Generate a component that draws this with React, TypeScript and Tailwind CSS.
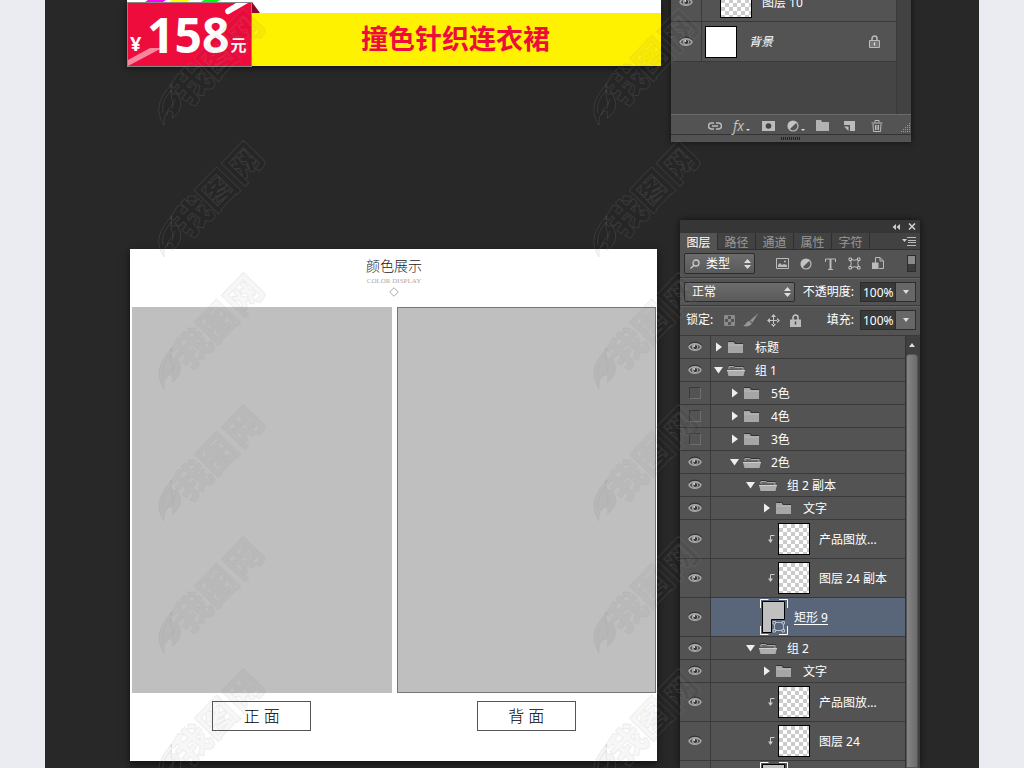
import type { ReactNode } from 'react'

type Layer = {
  name: string
  kind: 'closed' | 'open' | 'image' | 'shape'
  indent: string
  hidden?: boolean
}

const layers: Layer[] = [
  { name: '标题', kind: 'closed', indent: 'pl-[3px]' },
  { name: '组 1', kind: 'open', indent: 'pl-[3px]' },
  { name: '5色', kind: 'closed', indent: 'pl-[19px]', hidden: true },
  { name: '4色', kind: 'closed', indent: 'pl-[19px]', hidden: true },
  { name: '3色', kind: 'closed', indent: 'pl-[19px]', hidden: true },
  { name: '2色', kind: 'open', indent: 'pl-[19px]' },
  { name: '组 2 副本', kind: 'open', indent: 'pl-[35px]' },
  { name: '文字', kind: 'closed', indent: 'pl-[51px]' },
  { name: '产品图放...', kind: 'image', indent: 'pl-14' },
  { name: '图层 24 副本', kind: 'image', indent: 'pl-14' },
  { name: '矩形 9', kind: 'shape', indent: 'pl-[49px]' },
  { name: '组 2', kind: 'open', indent: 'pl-[35px]' },
  { name: '文字', kind: 'closed', indent: 'pl-[51px]' },
  { name: '产品图放...', kind: 'image', indent: 'pl-14' },
  { name: '图层 24', kind: 'image', indent: 'pl-14' },
  { name: '矩形 9', kind: 'shape', indent: 'pl-[49px]' },
]

const tabs = ['图层', '路径', '通道', '属性', '字符']

function Eye() {
  return (
    <svg width="14" height="12" viewBox="0 0 14 12" fill="none">
      <path d="M1 4C3 .200 11 .200 13 4" stroke="#2f2f2f" />
      <path d="M1 6C3 1.600 11 1.600 13 6 11 10.400 3 10.400 1 6z" stroke="#a8a8a8" strokeWidth="1.500" />
      <circle cx="7" cy="5.900" r="3" fill="#a8a8a8" />
      <circle cx="7.300" cy="6" r="1.900" fill="#333" />
      <circle cx="6.300" cy="5" r="0.900" fill="#ddd" />
    </svg>
  )
}

function Folder({ open }: { open?: boolean }) {
  if (open) {
    return (
      <svg width="18" height="12" viewBox="0 0 18 12">
        <path d="M2 5V2.500h5l1 1h8V6" fill="#6a6a6a" stroke="#a8a8a8" />
        <path d="M1.500 1.500H7l1 1h8.500" fill="none" stroke="#333" />
        <path d="M0 6h18l-1.500 6h-15z" fill="#adadad" />
        <path d="M0 6.500h18" stroke="#cfcfcf" />
      </svg>
    )
  }
  return (
    <svg className="ml-px" width="15" height="12" viewBox="0 0 15 12">
      <path d="M0 1h6l1 2h8v9H0z" fill="#a6a6a6" />
      <path d="M0 .500h6l1 2h8" fill="none" stroke="#333" />
      <path d="M0 4h15" stroke="#b9b9b9" />
    </svg>
  )
}

function Triangle({ open }: { open?: boolean }) {
  return (
    <svg width="10" height="10" viewBox="0 0 10 10" fill="#eee">
      {open ? <path d="M0 2h9L4.500 8.500z" /> : <path d="M2 .500v9L8 5z" />}
    </svg>
  )
}

function Lock() {
  return (
    <svg width="11" height="13" viewBox="0 0 11 13" fill="none">
      <path d="M3 5.500V3.500a2.500 2.500 0 0 1 5 0v2" stroke="#bbb" strokeWidth="1.500" />
      <path d="M.500 5.500h10v7H.500z" fill="#777" stroke="#bbb" />
      <path d="M4.800 7.500h1.400v3H4.800z" fill="#ddd" />
    </svg>
  )
}

function HalfCircle() {
  return (
    <svg width="12" height="12" viewBox="0 0 12 12">
      <circle cx="6" cy="6" r="5" fill="#555" stroke="#bbb" strokeWidth="1.200" />
      <path d="M2.400 9.600A5 5 0 0 1 9.600 2.400z" fill="#c4c4c4" />
    </svg>
  )
}

function ShapeIcon() {
  return (
    <svg width="13" height="13" viewBox="0 0 13 13" fill="#555" stroke="#c4c4c4">
      <path d="M3.500 2.500Q6.500 4 9.500 2.500M3.500 10.500Q6.500 9 9.500 10.500M2.500 3.500Q4 6.500 2.500 9.500M10.500 3.500Q9 6.500 10.500 9.500" />
      <path d="M1 1h2.500v2.500H1zM9.500 1H12v2.500H9.500zM1 9.500h2.500V12H1zM9.500 9.500H12V12H9.500z" />
    </svg>
  )
}

function UpDown() {
  return (
    <svg className="pointer-events-none col-start-1 row-start-1 mr-1 justify-self-end" width="7" height="10" viewBox="0 0 7 10" fill="#ddd">
      <path d="M0 4h7L3.500 0zM0 6h7L3.500 10z" />
    </svg>
  )
}

function DownCaret() {
  return (
    <svg width="6" height="4" viewBox="0 0 6 4" fill="#ddd">
      <path d="M0 0h6L3 4z" />
    </svg>
  )
}

function Checker() {
  return (
    <span className="block h-8 w-8 shrink-0 border border-black bg-white bg-[conic-gradient(#cbcbcb_25%,#fff_0_50%,#cbcbcb_0_75%,#fff_0)] bg-[length:8px_8px]" />
  )
}

function ShapeThumb() {
  return (
    <svg className="shrink-0" width="28" height="36" viewBox="0 0 28 36">
      <path d="M.500 9V.500h8M19 .500h8.500V9M.500 27v8.500h8M19 35.500h8.500V27" fill="none" stroke="#fff" />
      <path d="M2.500 2.500h22v18h-13v13h-9z" fill="#c0c0c0" stroke="#000" />
      <g fill="none" stroke="#b5c0cf">
        <path d="M15 23.500h7M15 31.500h7M14.500 25v6M23.500 25v6" />
        <path d="M13 22.500h2.500V25H13zM22 22.500h2.500V25H22zM13 30.500h2.500V33H13zM22 30.500h2.500V33H22z" />
      </g>
    </svg>
  )
}

function EyeCell({ hidden }: { hidden?: boolean }) {
  return (
    <button aria-label="可见性" className="flex w-[31px] shrink-0 items-center justify-center border-r border-[#3a3a3a]">
      {hidden ? <span className="h-3 w-3 border border-[#6e6e6e] border-t-[#3a3a3a] border-l-[#3a3a3a]" /> : <Eye />}
    </button>
  )
}

function LayerRow({ layer, active }: { layer: Layer; active: boolean }) {
  const group = layer.kind === 'closed' || layer.kind === 'open'
  return (
    <li className={`flex shrink-0 border-b border-[#393939] ${group ? 'h-[23px]' : 'h-[39px]'}`}>
      <EyeCell hidden={layer.hidden} />
      <div className={`flex flex-1 items-center ${layer.indent} ${active ? 'bg-[#596679]' : ''}`}>
        {group && (
          <>
            <Triangle open={layer.kind === 'open'} />
            <span className="ml-[3px] flex w-7">
              <Folder open={layer.kind === 'open'} />
            </span>
            <span className="pt-[2px]">{layer.name}</span>
          </>
        )}
        {layer.kind === 'image' && (
          <>
            <svg className="mr-[3px] shrink-0" width="8" height="10" viewBox="0 0 8 10" fill="none" stroke="#ccc">
              <path d="M7.500 1.500h-4V7" />
              <path d="M1 5.500h5L3.500 9z" fill="#ccc" stroke="none" />
            </svg>
            <Checker />
            <span className="ml-[9px] pt-[2px]">{layer.name}</span>
          </>
        )}
        {layer.kind === 'shape' && (
          <>
            <ShapeThumb />
            <span className="ml-[6px] pt-[2px] underline underline-offset-2">{layer.name}</span>
          </>
        )}
      </div>
    </li>
  )
}

function Percent({ id, label }: { id: string; label: string }) {
  return (
    <div className="ml-auto flex items-center">
      <label htmlFor={id} className="mr-[6px]">{label}</label>
      <input id={id} defaultValue="100%" className="h-5 w-9 border border-[#2c2c2c] bg-[#393939] pl-[2px] text-white" />
      <button aria-label={label} className="flex h-5 w-5 items-center justify-center border border-l-0 border-[#2c2c2c] bg-[#676767]">
        <DownCaret />
      </button>
    </div>
  )
}

function Tool({ label, children }: { label: string; children: ReactNode }) {
  return (
    <button aria-label={label} className="flex w-[27px] items-center justify-center pt-[2px]">
      {children}
    </button>
  )
}

function BottomPanel() {
  return (
    <aside className="-mt-[18px] flex w-60 shrink-0 flex-col bg-[#535353] text-xs text-white shadow-[0_0_6px_#111]">
      <div className="flex h-[132px] bg-[#454545]">
        <ul className="flex-1">
          <li className="flex h-10 border-b border-[#393939] bg-[#535353]">
            <EyeCell />
            <div className="flex flex-1 items-center pl-[18px]">
              <Checker />
              <span className="ml-[10px] pt-[2px]">图层 10</span>
            </div>
          </li>
          <li className="flex h-10 border-b border-[#393939] bg-[#535353]">
            <EyeCell />
            <div className="flex flex-1 items-center pr-4 pl-[3px]">
              <span className="h-8 w-8 border border-black bg-white" />
              <span className="ml-3 italic">背景</span>
              <span className="ml-auto"><Lock /></span>
            </div>
          </li>
        </ul>
        <div className="w-[15px] border-l border-[#3a3a3a] bg-[#424242]" />
      </div>
      <div className="flex h-[21px] items-stretch border-t border-b border-t-[#6b6b6b] border-b-[#333] pl-[30px]">
        <Tool label="链接图层">
          <svg width="14" height="8" viewBox="0 0 14 8" fill="none" stroke="#bbb" strokeWidth="1.500">
            <path d="M6 7H3.500a3 3 0 0 1 0-6H6M8 1h2.500a3 3 0 0 1 0 6H8M4 4h6" />
          </svg>
        </Tool>
        <Tool label="图层样式">
          <span className="font-['Open_Sans',sans-serif] text-sm leading-none text-[#c4c4c4] italic">fx</span>
          <svg className="mt-2 ml-[2px]" width="4" height="2" viewBox="0 0 4 2" fill="#ddd"><path d="M0 0h4L2 2z" /></svg>
        </Tool>
        <Tool label="蒙版">
          <svg width="13" height="10" viewBox="0 0 13 10">
            <path d="M0 0h13v10H0z" fill="#bbb" />
            <circle cx="6.500" cy="5" r="2.800" fill="#444" />
          </svg>
        </Tool>
        <Tool label="调整图层">
          <HalfCircle />
          <svg className="mt-2 ml-[2px]" width="4" height="2" viewBox="0 0 4 2" fill="#ddd"><path d="M0 0h4L2 2z" /></svg>
        </Tool>
        <Tool label="新建组"><svg width="13" height="11" viewBox="0 0 13 11" fill="#b2b2b2"><path d="M0 0h5l1 2h7v9H0z" /></svg></Tool>
        <Tool label="新建图层">
          <svg width="11" height="11" viewBox="0 0 11 11" fill="#bbb">
            <path d="M0 1h11v10H6V5H0z" />
            <path d="M0 6.500h4.500V11z" />
          </svg>
        </Tool>
        <Tool label="删除图层">
          <svg width="12" height="12" viewBox="0 0 12 12" fill="none" stroke="#bbb">
            <path d="M.500 3h11M4 2.500v-2h4v2M2 4l.500 7.500h7L10 4M4.500 5v5M6 5v5M7.500 5v5" />
          </svg>
        </Tool>
        <svg className="mt-auto mb-[2px] ml-auto" width="10" height="10" viewBox="0 0 10 10" stroke="#999" strokeDasharray="1 1">
          <path d="M0 9.500h10M2 7.500h8M4 5.500h6M6 3.500h4M8 1.500h2" />
        </svg>
      </div>
      <div className="flex h-[7px] items-center justify-center">
        <svg width="20" height="3" viewBox="0 0 20 3"><path d="M0 1.500h20" stroke="#222" strokeWidth="3" strokeDasharray="1 1" /></svg>
      </div>
    </aside>
  )
}

function LayersPanel() {
  return (
    <aside className="flex w-60 shrink-0 flex-col overflow-hidden rounded-t-[3px] bg-[#535353] text-xs text-white shadow-[0_0_6px_#111]">
      <div className="flex h-[13px] shrink-0 items-center justify-end gap-2 bg-[#363636] pr-1">
        <button aria-label="折叠">
          <svg width="8" height="6" viewBox="0 0 8 6" fill="#ccc"><path d="M4 0v6L.500 3zM8 0v6L4.500 3z" /></svg>
        </button>
        <button aria-label="关闭">
          <svg width="8" height="7" viewBox="0 0 8 7" stroke="#ccc" strokeWidth="1.600"><path d="M1 .500l6 6M7 .500l-6 6" /></svg>
        </button>
      </div>
      <div className="flex h-[17px] shrink-0 bg-[#424242]">
        {tabs.map((tab, i) => (
          <button
            key={tab}
            className={`w-[38px] border-r border-[#2f2f2f] pt-[2px] leading-4 ${i === 0 ? 'bg-[#535353] text-white' : 'border-b text-[#999]'}`}
          >
            {tab}
          </button>
        ))}
        <div className="flex flex-1 items-center justify-end border-b border-[#2f2f2f] pr-1">
          <svg width="14" height="9" viewBox="0 0 14 9" stroke="#bbb">
            <path d="M5 .500h9M6 3.500h8M6 5.500h8M5 8.500h9" />
            <path d="M0 2h5L2.500 5z" fill="#ccc" stroke="none" />
          </svg>
        </div>
      </div>

      {/* Filter */}
      <div className="flex h-7 shrink-0 items-center border-b border-[#3a3a3a] pr-1 pl-1">
        <div className="grid items-center">
          <select aria-label="类型" className="col-start-1 row-start-1 h-[21px] w-[71px] appearance-none rounded-[2px] border border-[#2c2c2c] bg-linear-to-b from-[#6c6c6c] to-[#5a5a5a] pl-[21px] text-white">
            <option>类型</option>
          </select>
          <svg className="pointer-events-none col-start-1 row-start-1 ml-[6px]" width="10" height="10" viewBox="0 0 10 10" fill="none" stroke="#ccc" strokeWidth="1.300">
            <circle cx="6" cy="4" r="3" />
            <path d="M4 6.200L.500 9.500" />
          </svg>
          <UpDown />
        </div>
        <div className="ml-[15px] flex items-center">
          <button aria-label="像素图层" className="flex w-6 justify-center">
            <svg width="13" height="11" viewBox="0 0 13 11">
              <path d="M.500.500h12v10H.500z" fill="none" stroke="#bbb" />
              <path d="M2 9V7l2-2 2 2 2-1 3 1v2z" fill="#bbb" />
              <circle cx="9" cy="3.500" r="1" fill="#bbb" />
            </svg>
          </button>
          <button aria-label="调整图层" className="flex w-6 justify-center"><HalfCircle /></button>
          <button aria-label="文字图层" className="flex w-6 justify-center">
            <svg width="11" height="12" viewBox="0 0 11 12" fill="none" stroke="#bbb">
              <path d="M.500 4V1h10v3M3 11.500h5" />
              <path d="M5.500 1v10.500" strokeWidth="2" />
            </svg>
          </button>
          <button aria-label="形状图层" className="flex w-6 justify-center"><ShapeIcon /></button>
          <button aria-label="智能对象" className="flex w-6 justify-center">
            <svg width="12" height="13" viewBox="0 0 12 13">
              <path d="M3.500 7V.500H8L11.500 4v7.500H7" fill="none" stroke="#bbb" />
              <path d="M8 .500V4h3.500" fill="none" stroke="#bbb" />
              <path d="M0 5.500h6.500V12H0z" fill="#bbb" />
            </svg>
          </button>
        </div>
        <button aria-label="过滤开关" className="ml-auto flex h-[17px] w-[9px] border border-[#2c2c2c] bg-[#3b3b3b]">
          <span className="h-2 w-full bg-[#8a8a8a]" />
        </button>
      </div>

      {/* Blend mode and opacity */}
      <div className="flex h-7 shrink-0 items-center border-t border-b border-t-[#626262] border-b-[#3a3a3a] pr-1 pl-1">
        <div className="grid items-center">
          <select aria-label="混合模式" className="col-start-1 row-start-1 h-5 w-[111px] appearance-none rounded-[2px] border border-[#2c2c2c] bg-linear-to-b from-[#6c6c6c] to-[#5a5a5a] pl-[7px] text-white">
            <option>正常</option>
          </select>
          <UpDown />
        </div>
        <Percent id="opacity" label="不透明度:" />
      </div>

      {/* Lock and fill */}
      <div className="flex h-[30px] shrink-0 items-center border-t border-b border-t-[#626262] border-b-[#3a3a3a] pr-1 pb-[2px] pl-[6px]">
        <span>锁定:</span>
        <div className="ml-[5px] flex">
          <button aria-label="锁定透明像素" className="flex w-[22px] items-center justify-center">
            <svg width="11" height="11" viewBox="0 0 11 11">
              <path d="M.500.500h10v10H.500z" fill="#555" stroke="#888" />
              <path d="M1 1h3v3H1zM7 1h3v3H7zM4 4h3v3H4zM1 7h3v3H1zM7 7h3v3H7z" fill="#8c8c8c" />
            </svg>
          </button>
          <button aria-label="锁定图像像素" className="flex w-[22px] items-center justify-center">
            <svg width="16" height="14" viewBox="0 0 16 14" fill="#959595">
              <path d="M15.500 0L7 7.500 9.500 9.500zM6.500 8l2.500 2.500C7 13.500 4 14 0 13c3-1 3-4.500 6.500-5z" />
            </svg>
          </button>
          <button aria-label="锁定位置" className="flex w-[22px] items-center justify-center">
            <svg width="13" height="13" viewBox="0 0 13 13" fill="#c4c4c4">
              <path d="M6 2h1v9H6zM2 6h9v1H2zM6.500 0L9 3H4zM6.500 13L9 10H4zM0 6.500L3 4v5zM13 6.500L10 4v5z" />
            </svg>
          </button>
          <button aria-label="锁定全部" className="flex w-[22px] items-center justify-center">
            <svg width="11" height="13" viewBox="0 0 11 13">
              <path d="M3 6V3.500a2.500 2.500 0 0 1 5 0V6" fill="none" stroke="#c4c4c4" strokeWidth="1.500" />
              <path d="M0 5.500h11V13H0z" fill="#bbb" />
              <path d="M4.800 7.500h1.400v3H4.800z" fill="#444" />
            </svg>
          </button>
        </div>
        <Percent id="fill" label="填充:" />
      </div>

      <div className="flex min-h-0 flex-1 overflow-hidden">
        <ul className="flex flex-1 flex-col">
          {layers.map((layer, i) => (
            <LayerRow key={i} layer={layer} active={i === 10} />
          ))}
        </ul>
        <div className="flex w-[15px] flex-col border-l border-[#333] bg-[#3f3f3f] pr-[2px]">
          <button aria-label="向上滚动" className="flex h-[18px] items-center justify-center">
            <svg width="6" height="4" viewBox="0 0 6 4" fill="#ddd"><path d="M0 4h6L3 0z" /></svg>
          </button>
          <div className="flex-1 rounded-t-[3px] border border-[#555] bg-linear-to-r from-[#858585] to-[#6b6b6b]" />
        </div>
      </div>
    </aside>
  )
}

function PriceBanner() {
  return (
    <section className="h-[66px] flex-1 bg-white shadow-[0_2px_6px_#111]">
      <div className="flex h-full">
        <div className="flex w-[125px] shrink-0 flex-col">
          <svg className="h-[2px] shrink-0" width="125" height="2" viewBox="0 0 125 2">
            <path d="M21 0h18l-3 2H18z" fill="#f0f" />
            <path d="M45 0h18l-3 2H42z" fill="#ff0" />
            <path d="M77 0h16l-3 2H74z" fill="#0f0" />
          </svg>
          <div className="relative flex h-[65px] shrink-0 items-end border border-[#888] bg-[#ee0c3c] font-bold text-white">
            <svg className="absolute inset-0" width="123" height="63" viewBox="0 0 123 63">
              <path d="M0 57L22 45h12L0 63z" fill="#fff" opacity="0.5" />
              <path d="M98 6L108 0h12L101 11a3 3 0 0 1-3-5z" fill="#fff" />
            </svg>
            <span className="relative mb-[10px] ml-[2px] w-[17px] text-xl leading-6">¥</span>
            <span className="relative text-5xl leading-[63px]">158</span>
            <span className="relative mb-[9px] ml-px text-base leading-6">元</span>
          </div>
        </div>
        <div className="flex flex-1 flex-col">
          <svg className="mt-[2px] shrink-0" width="8" height="11" viewBox="0 0 8 11"><path d="M0 0l8 11H0z" fill="#8c0a22" /></svg>
          <h1 className="flex-1 bg-[#fff200] pl-[109px] text-[27px] leading-[51px] font-bold whitespace-nowrap text-[#ee0c3c]">撞色针织连衣裙</h1>
        </div>
      </div>
    </section>
  )
}

function Artboard() {
  return (
    <section className="mt-[29px] flex-1 self-start bg-white pr-px pb-[30px] pl-[2px] shadow-[0_3px_8px_#111]">
      <header className="flex h-[58px] flex-col items-center pt-[7px] text-[#222]">
        <h2 className="text-sm leading-5 font-light">颜色展示</h2>
        <p className="font-['Liberation_Serif',serif] text-[7px] leading-[10px] text-[#aaa]">COLOR DISPLAY</p>
        <svg className="mt-px" width="10" height="10" viewBox="0 0 10 10" fill="none" stroke="#aaa"><path d="M5 .700L9.300 5 5 9.300.700 5z" /></svg>
      </header>
      <div className="flex gap-[5px] text-base font-light text-black">
        <figure className="flex flex-1 flex-col items-center">
          <div className="h-[386px] w-full bg-[#bfbfbf]" />
          <figcaption className="mt-2 h-[30px] w-[99px] border border-[#555] text-center leading-7">正 面</figcaption>
        </figure>
        <figure className="flex flex-1 flex-col items-center">
          <div className="h-[386px] w-full border border-[#777] bg-[#bfbfbf]" />
          <figcaption className="mt-2 h-[30px] w-[99px] border border-[#555] text-center leading-7">背 面</figcaption>
        </figure>
      </div>
    </section>
  )
}

function Watermark() {
  return (
    <svg className="h-[132px] w-[110px] shrink-0" viewBox="0 0 110 132" fill="#000" fillOpacity="0.04" stroke="#999" strokeOpacity="0.17">
      <path d="M6 121C-3 107 0 95 14 80c-2 10 1 12 4 9 8 9 5 20-4 25 2-5 0-8-3-7-5 3-5 8-5 14z" />
      <path d="M5 109C3 98 9 92 13 86c-1 9 4 13 1 19M9 111c0-8 7-9 8-16" fill="none" />
      <g transform="translate(34 100) rotate(-46)" fontSize="37" fontWeight="900">
        <text x="-4" y="0">我</text>
        <text x="32" y="0">图</text>
        <text x="70" y="0">网</text>
      </g>
    </svg>
  )
}

export default function App() {
  return (
    <div className="flex h-screen overflow-hidden bg-[#ebecf1] px-[45px] font-['Noto_Sans','Noto_Sans_CJK_SC',sans-serif]">
      <main className="relative flex flex-1 flex-col bg-[#282828]">
        <div className="flex h-[220px] shrink-0 items-start gap-[10px] pr-[68px] pl-[82px]">
          <PriceBanner />
          <BottomPanel />
        </div>
        <div className="flex min-h-0 flex-1 gap-[23px] pr-[59px] pl-[85px]">
          <Artboard />
          <LayersPanel />
        </div>

        <div aria-hidden="true" className="pointer-events-none absolute inset-0 flex gap-[325px] overflow-hidden pl-[113px]">
          {[0, 1].map((col) => (
            <div key={col} className="flex shrink-0 flex-col pt-[4px]">
              {[0, 1, 2, 3, 4, 5].map((row) => (
                <Watermark key={row} />
              ))}
            </div>
          ))}
        </div>
      </main>
    </div>
  )
}
